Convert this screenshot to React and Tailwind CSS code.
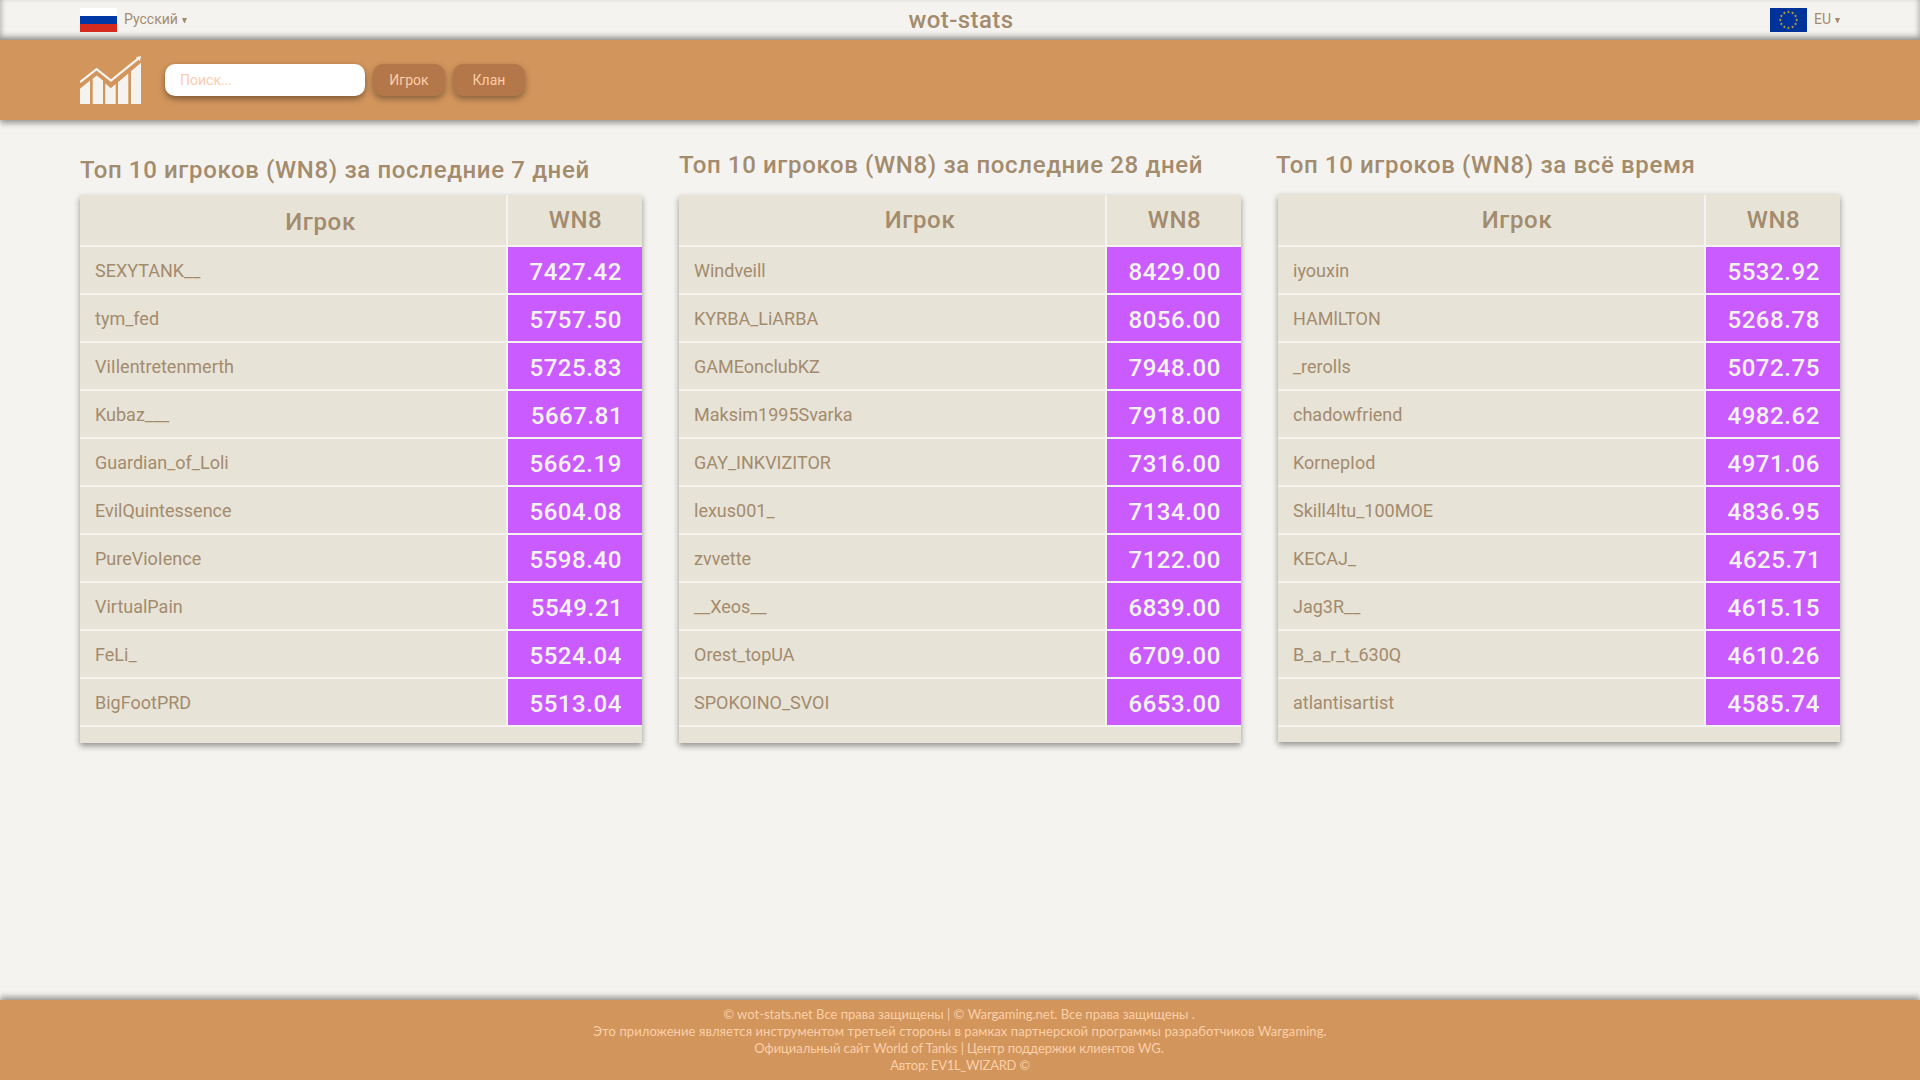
const TABLES = [
  {
    title: "Топ 10 игроков (WN8) за последние 7 дней",
    titleClass: "mt-[34px] mb-[9px]",
    headClass: "pl-[55px] pt-1",
    nameClass: "pl-[15px]",
    boxClass: "",
    footClass: "h-4",
    rows: [
      ["SEXYTANK__", "7427.42"],
      ["tym_fed", "5757.50"],
      ["ViIlentretenmerth", "5725.83"],
      ["Kubaz___", "5667.81"],
      ["Guardian_of_Loli", "5662.19"],
      ["EvilQuintessence", "5604.08"],
      ["PureVioIence", "5598.40"],
      ["VirtualPain", "5549.21"],
      ["FeLi_", "5524.04"],
      ["BigFootPRD", "5513.04"],
    ],
  },
  {
    title: "Топ 10 игроков (WN8) за последние 28 дней",
    titleClass: "mt-[29px] mb-[14px]",
    headClass: "pl-[56px]",
    nameClass: "pl-[15px]",
    boxClass: "",
    footClass: "h-4",
    rows: [
      ["Windveill", "8429.00"],
      ["KYRBA_LiARBA", "8056.00"],
      ["GAMEonclubKZ", "7948.00"],
      ["Maksim1995Svarka", "7918.00"],
      ["GAY_INKVIZITOR", "7316.00"],
      ["lexus001_", "7134.00"],
      ["zvvette", "7122.00"],
      ["__Xeos__", "6839.00"],
      ["Orest_topUA", "6709.00"],
      ["SPOKOINO_SVOI", "6653.00"],
    ],
  },
  {
    title: "Топ 10 игроков (WN8) за всё время",
    titleClass: "mt-[29px] mb-[13px] -ml-0.5",
    headClass: "pl-[52px]",
    nameClass: "pl-[15px]",
    boxClass: "pt-px",
    footClass: "h-[15px]",
    rows: [
      ["iyouxin", "5532.92"],
      ["HAMlLTON", "5268.78"],
      ["_rerolls", "5072.75"],
      ["chadowfriend", "4982.62"],
      ["KornepIod", "4971.06"],
      ["Skill4ltu_100MOE", "4836.95"],
      ["KECAJ_", "4625.71"],
      ["Jag3R__", "4615.15"],
      ["B_a_r_t_630Q", "4610.26"],
      ["atlantisartist", "4585.74"],
    ],
  },
];

const STARS = Array.from({ length: 12 }, (_, i) => {
  const a = (i * Math.PI) / 6;
  return [18.5 + 8.2 * Math.sin(a), 12 - 8 * Math.cos(a)];
});

function Caret() {
  return (
    <svg className="h-[5px] w-[5px]" viewBox="0 0 5 5" fill="currentColor">
      <path d="M0 0H5L2.9 5H2.1Z" />
    </svg>
  );
}

function FlagRu() {
  return (
    <span className="flex h-6 w-[37px] flex-col">
      <span className="h-2 bg-white" />
      <span className="h-2 bg-[#0039a6]" />
      <span className="h-2 bg-[#d52b1e]" />
    </span>
  );
}

function FlagEu() {
  return (
    <svg className="h-6 w-[37px] bg-[#003399]" viewBox="0 0 37 24">
      {STARS.map(([x, y], i) => (
        <path
          key={i}
          transform={`translate(${x} ${y})`}
          d="M0 -1.7L.4 -.5H1.6L.6 .2L1 1.4L0 .7L-1 1.4L-.6 .2L-1.6 -.5H-.4Z"
          fill="#c9b02c"
        />
      ))}
    </svg>
  );
}

function Logo() {
  return (
    <svg className="h-12 w-[61px]" viewBox="0 0 61 48" fill="#f5f3ef">
      <path d="M0 32.7L10 24.4V48H0Z" />
      <path d="M12.7 22.8L16.7 19.6L23 24.6V48H12.7Z" />
      <path d="M25.3 27.3L30.7 32.2L35.7 28V48H25.3Z" />
      <path d="M38 26.2L48.3 17.5V48H38Z" />
      <path d="M51 15.2L61 6.8V48H51Z" />
      <path d="M0 26.1L16.6 13.2L31 24.6L58.5 2.4" fill="none" stroke="#f5f3ef" strokeWidth="2.3" />
      <path d="M61 0L60 5.2L55.8 1.2Z" />
    </svg>
  );
}

function Table({ table }) {
  return (
    <section className="w-[562px]">
      <h2 className={`h-8 text-2xl leading-8 font-medium tracking-[0.64px] whitespace-nowrap ${table.titleClass}`}>
        {table.title}
      </h2>
      <div className={`bg-[#e7e3d7] shadow-[0_3px_6px_rgba(0,0,0,0.4)] ${table.boxClass}`}>
        <div className="flex h-[52px] border-b-2 border-[#f5f3ef] text-2xl font-medium tracking-[0.64px]">
          <div className={`flex w-[428px] items-center justify-center border-r-2 border-[#f5f3ef] ${table.headClass}`}>
            Игрок
          </div>
          <div className="flex flex-1 items-center justify-center pl-px">WN8</div>
        </div>
        {table.rows.map(([name, score]) => (
          <div key={name} className="flex h-12 border-b-2 border-[#f5f3ef]">
            <div className={`flex w-[428px] items-center border-r-2 border-[#f5f3ef] pt-px text-lg ${table.nameClass}`}>
              {name}
            </div>
            <div
              className={`flex flex-1 items-center justify-center bg-[#ca5bff] pt-1 text-2xl font-medium tracking-[0.6px] text-[#f5f3ef] ${
                score.endsWith("1") ? "pl-[4px]" : "pl-[1.5px]"
              }`}
            >
              {score}
            </div>
          </div>
        ))}
        <div className={table.footClass} />
      </div>
    </section>
  );
}

function ActionButton({ children }) {
  return (
    <button className="h-8 w-[72px] rounded-[10px] bg-[#b4774a] text-sm text-[#fccda6] shadow-[0_3px_6px_rgba(0,0,0,0.35)]">
      {children}
    </button>
  );
}

export default function App() {
  return (
    <div className="flex h-[1080px] w-[1920px] flex-col overflow-hidden bg-[#f5f3ef] font-[Roboto,sans-serif] text-[#a38b6e]">
      <header className="grid h-10 grid-cols-3 items-center px-20 shadow-[inset_0_-3px_6px_rgba(0,0,0,0.4)]">
        <div className="flex items-center">
          <FlagRu />
          <span className="mr-1 ml-[7px] -mt-0.5 text-sm">Русский</span>
          <Caret />
        </div>
        <h1 className="pl-0.5 text-center text-2xl leading-8 font-medium tracking-[0.4px]">wot-stats</h1>
        <div className="flex items-center justify-end">
          <FlagEu />
          <span className="mr-1 ml-[7px] -mt-0.5 text-sm">EU</span>
          <Caret />
        </div>
      </header>
      <nav className="flex h-20 items-center bg-[#d2955c] px-20 shadow-[0_3px_6px_rgba(0,0,0,0.4)]">
        <Logo />
        <input
          className="mr-2 ml-6 h-8 w-[200px] rounded-[10px] bg-white px-[15px] text-sm shadow-[0_3px_6px_rgba(0,0,0,0.4)] placeholder:text-[#fdccb0]"
          placeholder="Поиск..."
        />
        <div className="flex gap-2">
          <ActionButton>Игрок</ActionButton>
          <ActionButton>Клан</ActionButton>
        </div>
      </nav>
      <main className="flex flex-1 items-start gap-[37px] px-20">
        {TABLES.map((t) => (
          <Table key={t.title} table={t} />
        ))}
      </main>
      <footer className="h-20 bg-[#d2955c] pt-1.5 text-center font-[Lato,sans-serif] text-[13px] leading-[17px] text-[#fccfa8] shadow-[0_-3px_6px_rgba(0,0,0,0.4)]">
        <p className="pr-0.5">
          © wot-stats.net Все права защищены | © Wargaming.net. Все права защищены .
        </p>
        <p className="tracking-[0.08px]">
          Это приложение является инструментом третьей стороны в рамках партнерской программы разработчиков Wargaming.
        </p>
        <p className="pr-0.5 tracking-[-0.07px]">
          Официальный сайт World of Tanks | Центр поддержки клиентов WG.
        </p>
        <p className="tracking-[-0.28px]">Автор: EV1L_WIZARD ©</p>
      </footer>
    </div>
  );
}
